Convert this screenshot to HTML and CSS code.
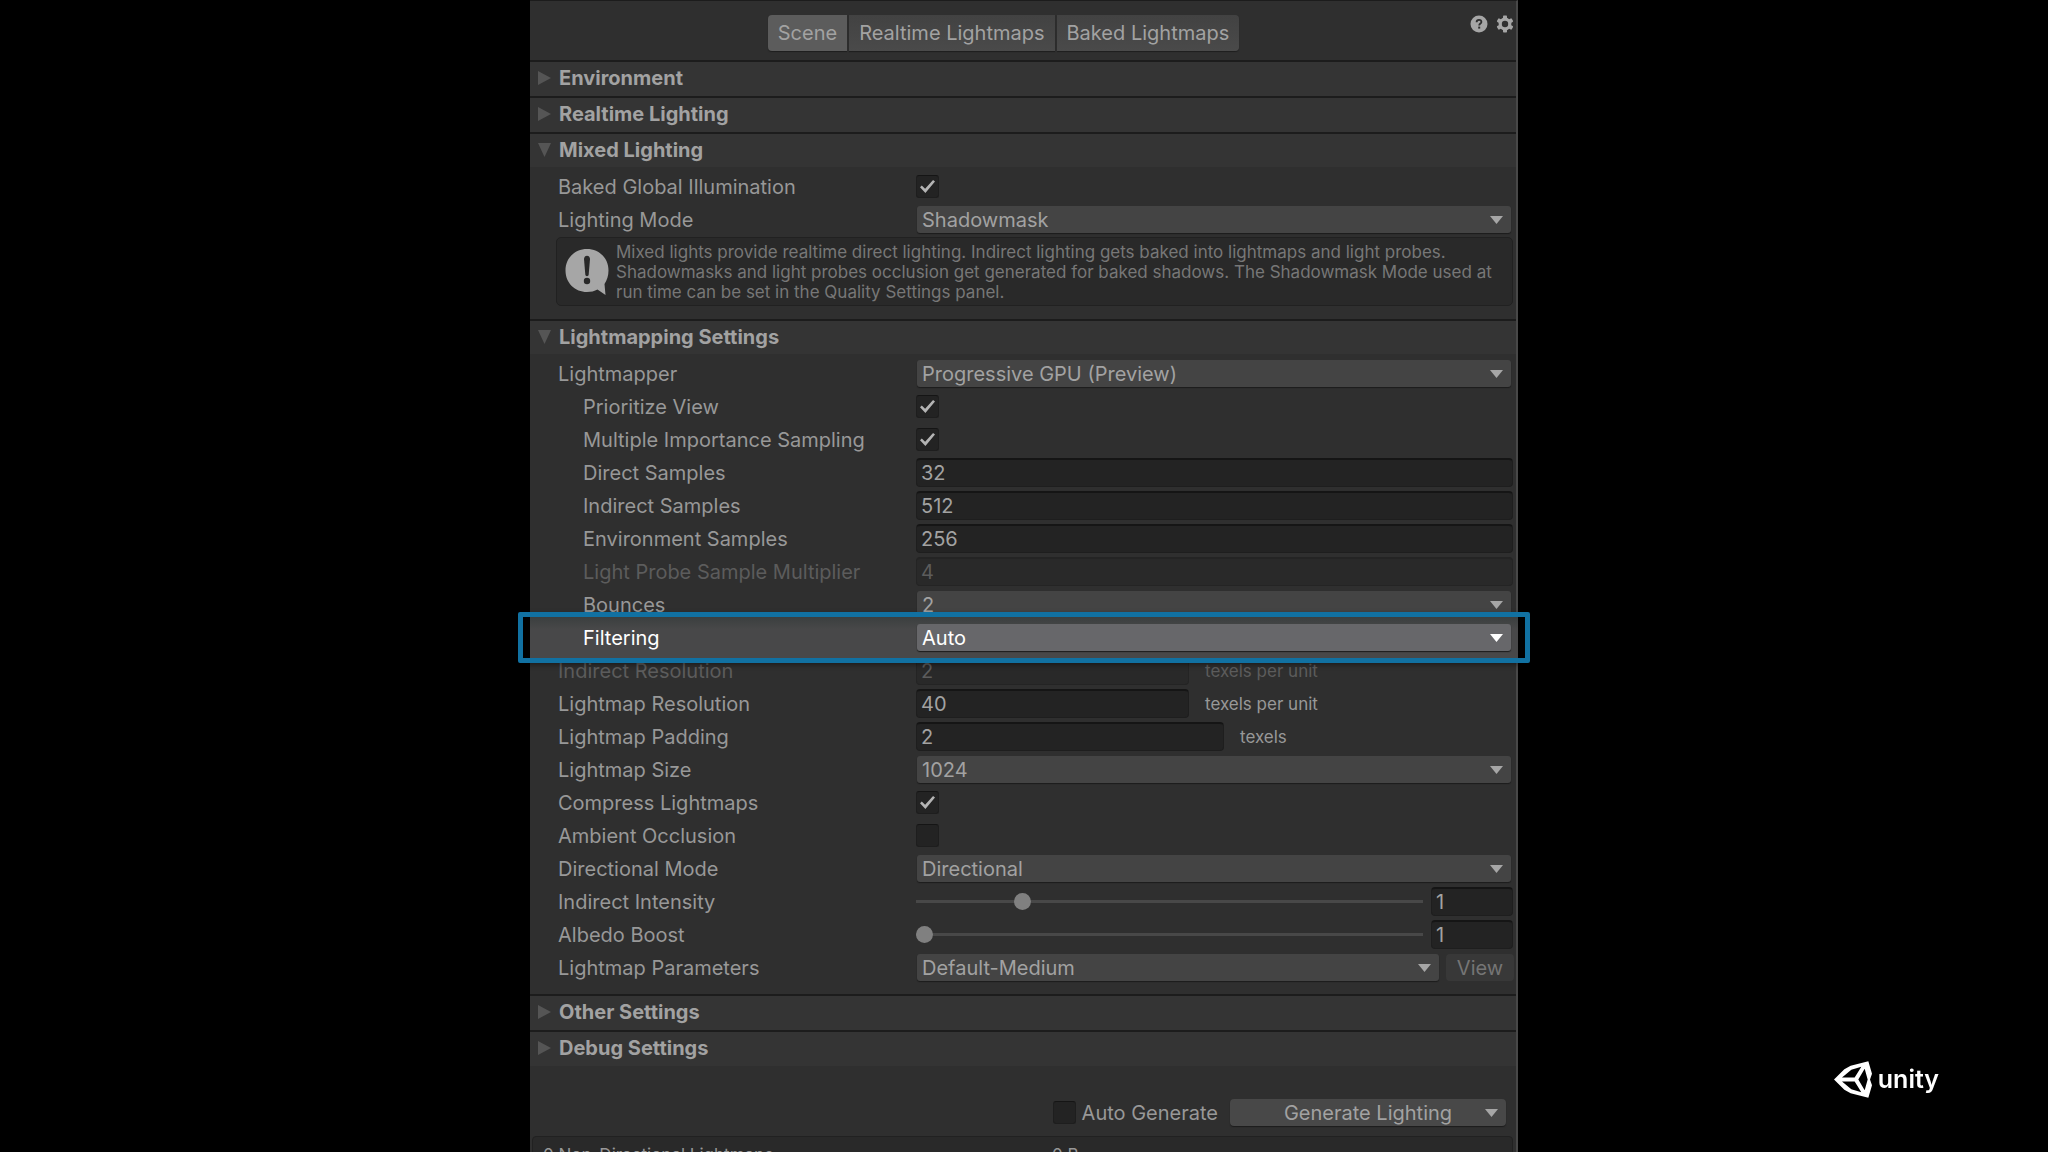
FILE: index.html
```html
<!DOCTYPE html>
<html lang="en">
<head>
  <meta charset="UTF-8" />
  <meta name="viewport" content="width=device-width, initial-scale=1"/>
  <title>Lighting – Unity</title>
  <link rel="stylesheet" href="styles.css">
</head>
<body>

  <main class="panel">

    <!-- Toolbar -->
    <header class="toolbar">
      <nav class="tabs">
        <button class="tab active">Scene</button>
        <button class="tab">Realtime Lightmaps</button>
        <button class="tab">Baked Lightmaps</button>
      </nav>
      <div class="tools">
        <button class="icon-btn" aria-label="Help">
          <svg viewBox="0 0 18 18" width="18" height="18">
            <circle cx="9" cy="9" r="8.5" fill="#a6a6a6"/>
            <path d="M6.6 7.2C6.6 5.6 7.6 4.8 9 4.8s2.4.9 2.4 2.1c0 1.6-2.2 1.7-2.2 3.5" fill="none" stroke="#2f2f2f" stroke-width="1.8"/>
            <rect x="8.2" y="11.6" width="2" height="2" fill="#2f2f2f"/>
          </svg>
        </button>
        <button class="icon-btn" aria-label="Settings">
          <svg viewBox="0 0 18 18" width="18" height="18">
            <g fill="#a6a6a6">
              <rect x="7" y="0.5" width="4" height="17" rx="0.8"/>
              <rect x="7" y="0.5" width="4" height="17" rx="0.8" transform="rotate(60 9 9)"/>
              <rect x="7" y="0.5" width="4" height="17" rx="0.8" transform="rotate(120 9 9)"/>
              <circle cx="9" cy="9" r="6.4"/>
            </g>
            <circle cx="9" cy="9" r="3.2" fill="#2f2f2f"/>
          </svg>
        </button>
      </div>
    </header>

    <!-- Environment / Realtime -->
    <section>
      <h2 class="foldout"><button>Environment</button></h2>
    </section>
    <section>
      <h2 class="foldout"><button>Realtime Lighting</button></h2>
    </section>

    <!-- Mixed Lighting -->
    <section>
      <h2 class="foldout open"><button>Mixed Lighting</button></h2>
      <div class="rows">
        <div class="row">
          <label for="baked-gi">Baked Global Illumination</label>
          <input type="checkbox" id="baked-gi" checked>
        </div>
        <div class="row">
          <label for="lighting-mode">Lighting Mode</label>
          <div class="dropdown"><select id="lighting-mode"><option>Shadowmask</option></select></div>
        </div>
        <div class="help-box">
          <svg viewBox="0 0 44 48" width="44" height="48">
            <path d="M22 1C10 1 .5 10 .5 22.500S10 44 22 44c4 0 7.500-.8 10.500-2.500L40.500 47 39.500 36c2.500-4 4-8 4-13.500C43.500 10 34 1 22 1z" fill="#a6a6a6"/>
            <path d="M19 11c0-4.500 6-4.500 6 0l-1.300 15.500c-.2 2.200-3.200 2.200-3.400 0z" fill="#292929"/>
            <circle cx="22" cy="33" r="3.200" fill="#292929"/>
          </svg>
          <p>Mixed lights provide realtime direct lighting. Indirect lighting gets baked into lightmaps and light probes.<br>
            Shadowmasks and light probes occlusion get generated for baked shadows. The Shadowmask Mode used at<br>
            run time can be set in the Quality Settings panel.</p>
        </div>
      </div>
    </section>

    <!-- Lightmapping Settings -->
    <section>
      <h2 class="foldout open"><button>Lightmapping Settings</button></h2>
      <div class="rows">
        <div class="row">
          <label for="lightmapper">Lightmapper</label>
          <div class="dropdown"><select id="lightmapper"><option>Progressive GPU (Preview)</option></select></div>
        </div>
        <div class="row sub">
          <label for="prioritize">Prioritize View</label>
          <input type="checkbox" id="prioritize" checked>
        </div>
        <div class="row sub">
          <label for="mis">Multiple Importance Sampling</label>
          <input type="checkbox" id="mis" checked>
        </div>
        <div class="row sub">
          <label for="direct">Direct Samples</label>
          <input type="text" id="direct" value="32">
        </div>
        <div class="row sub">
          <label for="indirect">Indirect Samples</label>
          <input type="text" id="indirect" value="512">
        </div>
        <div class="row sub">
          <label for="env">Environment Samples</label>
          <input type="text" id="env" value="256">
        </div>
        <div class="row sub disabled">
          <label for="probe">Light Probe Sample Multiplier</label>
          <input type="text" id="probe" value="4" disabled>
        </div>
        <div class="row sub">
          <label for="bounces">Bounces</label>
          <div class="dropdown"><select id="bounces"><option>2</option></select></div>
        </div>
        <div class="row sub highlight">
          <label for="filtering">Filtering</label>
          <div class="dropdown"><select id="filtering"><option>Auto</option></select></div>
        </div>
        <div class="row disabled">
          <label for="indirect-res">Indirect Resolution</label>
          <input type="text" id="indirect-res" class="medium" value="2" disabled>
          <span class="unit">texels per unit</span>
        </div>
        <div class="row">
          <label for="lightmap-res">Lightmap Resolution</label>
          <input type="text" id="lightmap-res" class="medium" value="40">
          <span class="unit">texels per unit</span>
        </div>
        <div class="row">
          <label for="padding">Lightmap Padding</label>
          <input type="text" id="padding" class="wide" value="2">
          <span class="unit">texels</span>
        </div>
        <div class="row">
          <label for="size">Lightmap Size</label>
          <div class="dropdown"><select id="size"><option>1024</option></select></div>
        </div>
        <div class="row">
          <label for="compress">Compress Lightmaps</label>
          <input type="checkbox" id="compress" checked>
        </div>
        <div class="row">
          <label for="ao">Ambient Occlusion</label>
          <input type="checkbox" id="ao">
        </div>
        <div class="row">
          <label for="directional">Directional Mode</label>
          <div class="dropdown"><select id="directional"><option>Directional</option></select></div>
        </div>
        <div class="row">
          <label for="intensity">Indirect Intensity</label>
          <input type="range" id="intensity" min="0" max="5" value="1">
          <input type="text" class="small" value="1" aria-label="Indirect Intensity value">
        </div>
        <div class="row">
          <label for="albedo">Albedo Boost</label>
          <input type="range" id="albedo" min="1" max="10" value="1">
          <input type="text" class="small" value="1" aria-label="Albedo Boost value">
        </div>
        <div class="row">
          <label for="params">Lightmap Parameters</label>
          <div class="dropdown"><select id="params"><option>Default-Medium</option></select></div>
          <button class="view-btn" disabled>View</button>
        </div>
      </div>
    </section>

    <!-- Other / Debug -->
    <section>
      <h2 class="foldout"><button>Other Settings</button></h2>
    </section>
    <section>
      <h2 class="foldout"><button>Debug Settings</button></h2>
    </section>

    <!-- Generate -->
    <div class="actions">
      <input type="checkbox" id="auto-generate">
      <label for="auto-generate">Auto Generate</label>
      <button class="generate-btn">Generate Lighting</button>
    </div>

    <div class="stats">
      <span>0 Non-Directional Lightmaps</span>
      <span>0 B</span>
    </div>
  </main>

  <!-- Logo -->
  <div class="logo">
    <svg viewBox="0 0 114 110" width="38" height="37">
      <path fill="#fff" fill-rule="evenodd" d="M0 55 31 24 50 14 103 0 114 38 108 55 114 72 103 110 50 96 31 86ZM24 49 62 49 82 17 52 26ZM24 61 52 84 82 93 62 61ZM73 55 92 87 101 55 92 23Z"/>
    </svg>
    <span>unity</span>
  </div>

</body>
</html>
```
FILE: styles.css
```css
/* Base */
* {
  box-sizing: border-box;
}

body {
  margin: 0;
  background: #000;
  color: #989898;
  font-family: Inter, "Liberation Sans", sans-serif;
  font-size: 20px;
  height: 100vh;
  overflow: hidden;
}

button, input, select {
  font: inherit;
  color: #a2a2a2;
  border: none;
  margin: 0;
  padding: 0;
}

/* Panel */
.panel {
  max-width: 988px;
  min-height: 100vh;
  margin: 0 auto;
  background: #2f2f2f;
  border-top: 1px solid #1c1c1c;
  border-right: 2px solid #484848;
}

/* Toolbar */
.toolbar {
  display: flex;
  align-items: flex-start;
  height: 59px;
  padding: 14px 2px 0 7px;
}

.tabs {
  display: flex;
  flex: 1;
  justify-content: center;
  gap: 2px;
}

.tab {
  height: 36px;
  padding: 0 10px;
  background: linear-gradient(#424242, #4a4a4a);
  box-shadow: 0 1px 1px #1f1f1f;
}

.tab:first-child {
  border-radius: 4px 0 0 4px;
}

.tab:last-child {
  border-radius: 0 4px 4px 0;
}

.tab.active {
  background: #5c5c5c;
}

.tools {
  display: flex;
  gap: 8px;
}

.icon-btn {
  height: 18px;
  background: none;
}

.icon-btn svg {
  display: block;
}

/* Foldouts */
.foldout {
  margin: 0;
  height: 36px;
  background: #343434;
  border-top: 2px solid #1c1c1c;
  font-size: 20px;
}

.foldout button {
  display: flex;
  align-items: center;
  width: 100%;
  height: 32px;
  padding-left: 8px;
  background: none;
  text-align: left;
}

.foldout button::before {
  content: "";
  width: 13px;
  height: 14px;
  margin-right: 8px;
  background: #555;
  clip-path: polygon(0 0, 100% 50%, 0 100%);
}

.foldout.open {
  height: 35px;
}

.foldout.open button::before {
  clip-path: polygon(0 0, 100% 0, 50% 100%);
}

/* Rows */
.rows {
  padding: 3px 3px 10px 28px;
}

.row {
  display: flex;
  align-items: center;
  position: relative;
  height: 33px;
}

.row label {
  flex: 0 0 358px;
}

.row.sub label {
  padding-left: 25px;
}

.row.disabled label,
.row.disabled input,
.row.disabled .unit {
  color: #5c5c5c;
}

.row.disabled input {
  background: #292929;
  border-color: #242424;
}

.unit {
  margin-left: 16px;
  font-size: 17px;
}

/* Fields */
input[type="text"] {
  flex: 1;
  min-width: 0;
  height: 29px;
  padding: 0 4px;
  background: #232323;
  border: 1px solid #1e1e1e;
  border-top: 2px solid #151515;
  border-radius: 4px;
}

input[type="text"].medium {
  flex: 0 0 273px;
}

input[type="text"].wide {
  flex: 0 0 308px;
}

input[type="text"].small {
  flex: 0 0 82px;
}

input[type="checkbox"] {
  appearance: none;
  display: grid;
  place-items: center;
  width: 23px;
  height: 23px;
  background: #232323;
  border: 1px solid #1e1e1e;
  border-top-color: #151515;
  border-radius: 3px;
}

input[type="checkbox"]:checked::before {
  content: "";
  width: 15px;
  height: 13px;
  background: #b4b4b4;
  clip-path: polygon(0 55%, 12% 42%, 34% 68%, 87% 0, 100% 12%, 36% 100%);
}

.dropdown {
  flex: 1;
  position: relative;
  margin: 0 2px 0 1px;
}

.dropdown select {
  appearance: none;
  display: block;
  width: 100%;
  height: 27px;
  padding: 0 30px 0 5px;
  background: #444;
  border-radius: 3px;
  box-shadow: 0 1px 1px #1c1c1c;
}

.dropdown::after,
.generate-btn::after {
  content: "";
  position: absolute;
  top: 10px;
  right: 8px;
  width: 13px;
  height: 8px;
  background: #a6a6a6;
  clip-path: polygon(0 0, 100% 0, 50% 100%);
  pointer-events: none;
}

/* Sliders */
input[type="range"] {
  appearance: none;
  flex: 1;
  min-width: 0;
  height: 17px;
  margin-right: 8px;
  background: linear-gradient(#484848, #484848) center / 100% 3px no-repeat;
}

input[type="range"]::-webkit-slider-thumb {
  appearance: none;
  width: 17px;
  height: 17px;
  border-radius: 50%;
  background: #808080;
}

.view-btn {
  width: 68px;
  height: 27px;
  margin: 0 -1px 0 5px;
  background: #383838;
  border-radius: 4px;
  color: #757575;
}

/* Info message */
.help-box {
  display: flex;
  align-items: center;
  gap: 7px;
  height: 69px;
  margin: 1px 0 3px -2px;
  padding: 0 8px;
  background: #292929;
  border: 1px solid #212121;
  border-radius: 5px;
}

.help-box svg {
  flex: none;
}

.help-box p {
  margin: 0;
  color: #777;
  font-size: 17px;
  line-height: 20px;
  white-space: nowrap;
}

/* Highlighted row */
.row.highlight {
  z-index: 1;
}

.row.highlight::before {
  content: "";
  position: absolute;
  inset: -4px -5px -4px -28px;
  background: linear-gradient(#3b3f3f, #484849 30%);
  z-index: -1;
}

.row.highlight::after {
  content: "";
  position: absolute;
  inset: -9px -17px -9px -40px;
  border: 5px solid #1171a2;
  border-radius: 2px;
  box-shadow: 0 2px 5px rgba(0, 0, 0, 0.4);
  pointer-events: none;
}

.highlight label,
.highlight select {
  color: #fff;
}

.highlight .dropdown select {
  background: #67676a;
}

.highlight .dropdown::after {
  background: #fff;
}

/* Footer */
.actions {
  display: flex;
  align-items: center;
  justify-content: flex-end;
  padding: 33px 10px 10px;
}

.actions label {
  margin: 0 12px 0 6px;
}

.generate-btn {
  position: relative;
  width: 276px;
  height: 27px;
  background: #484848;
  border-radius: 4px;
  box-shadow: 0 1px 1px #1c1c1c;
}

.stats {
  display: grid;
  grid-template-columns: 509px 1fr;
  margin: 0 3px 0 2px;
  padding: 8px 10px;
  background: #292929;
  border: 1px solid #212121;
  border-radius: 4px;
  font-size: 17px;
  line-height: 20px;
}

/* Logo */
.logo {
  position: fixed;
  right: 109px;
  bottom: 54px;
  display: flex;
  align-items: center;
  gap: 6px;
  color: #fff;
  font-size: 25px;
  font-weight: 600;
  line-height: 37px;
}
```
